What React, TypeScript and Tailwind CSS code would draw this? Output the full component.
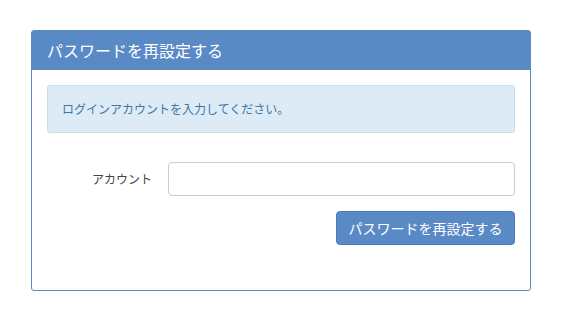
import React from 'react';

const font = { fontFamily: '"Noto Sans CJK JP", "Noto Sans", sans-serif' };

const App: React.FC = () => {
  return (
    <div className="w-[562px] h-[319px] bg-white pt-[30px] pl-[31px]" style={font}>
      <div className="w-[500px] h-[261px] border border-[#5a8ac6] rounded-[3px] flex flex-col">
        <div className="h-[39px] bg-[#5a8ac6] text-white text-[16px] leading-[39px] pl-[15px]">
          パスワードを再設定する
        </div>
        <div className="px-[15px] pt-[15px]">
          <div className="h-[48px] bg-[#ddebf6] border border-[#c4dfee] rounded-[3px] text-[#3f77a3] text-[12px] flex items-center pl-[14px]">
            ログインアカウントを入力してください。
          </div>
          <div className="mt-[29px] flex items-center">
            <label className="w-[106px] text-right text-[12px] text-[#444] pr-[1px]">アカウント</label>
            <input
              type="text"
              className="ml-[15px] flex-1 h-[34px] border border-[#cccccc] rounded-[4px] outline-none px-3 text-sm"
            />
          </div>
          <div className="mt-[15px] flex justify-end">
            <button className="w-[179px] h-[34px] bg-[#5a8ac6] border border-[#4a7ab6] rounded-[4px] text-white text-[14px]">
              パスワードを再設定する
            </button>
          </div>
        </div>
      </div>
    </div>
  );
};

export default App;
